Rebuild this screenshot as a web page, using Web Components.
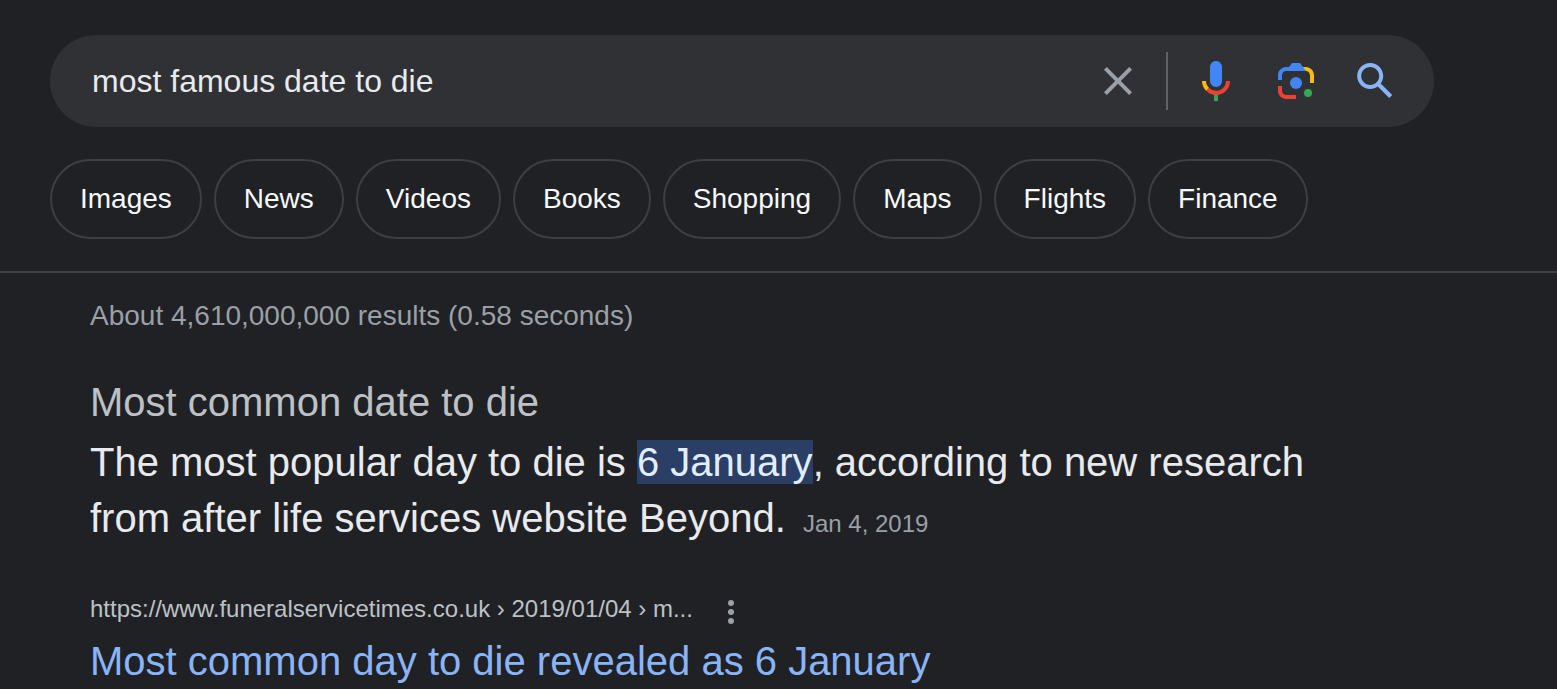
<!DOCTYPE html>
<html lang="en">
<head>
<meta charset="utf-8">
<title>most famous date to die - Search</title>
<style>
  body { margin: 0; background: #202124; color: #e8eaed; font-family: "Liberation Sans", Arial, sans-serif; }
</style>
</head>
<body>
<search-page>
  <search-box slot="header" query="most famous date to die"></search-box>
  <filter-bar slot="header">
    <filter-chip>Images</filter-chip>
    <filter-chip>News</filter-chip>
    <filter-chip>Videos</filter-chip>
    <filter-chip>Books</filter-chip>
    <filter-chip>Shopping</filter-chip>
    <filter-chip>Maps</filter-chip>
    <filter-chip>Flights</filter-chip>
    <filter-chip>Finance</filter-chip>
  </filter-bar>
  <result-stats>About 4,610,000,000 results (0.58 seconds)</result-stats>
  <answer-card>
    <span slot="heading">Most common date to die</span>
    The most popular day to die is <answer-mark>6 January</answer-mark>, according to new research from after life services website Beyond.
    <span slot="date">Jan 4, 2019</span>
  </answer-card>
  <result-link>
    <span slot="url">https://www.funeralservicetimes.co.uk › 2019/01/04 › m...</span>
    Most common day to die revealed as 6 January
  </result-link>
</search-page>

<script>
  const define = (name, html, setup) => {
    const template = document.createElement('template');
    template.innerHTML = html;
    customElements.define(name, class extends HTMLElement {
      constructor() {
        super();
        this.attachShadow({ mode: 'open' }).append(template.content.cloneNode(true));
      }
      connectedCallback() {
        if (setup) setup(this);
      }
    });
  };

  define('search-page', `
    <style>
      :host { display: block; }
      header { display: flex; flex-direction: column; gap: 32px; padding: 35px 50px 32px; border-bottom: 2px solid #3c4043; }
      main { padding: 26px 90px 0; }
    </style>
    <header><slot name="header"></slot></header>
    <main><slot></slot></main>`);

  define('search-box', `
    <style>
      :host { display: block; max-width: 1384px; }
      form { display: flex; align-items: center; height: 92px; box-sizing: border-box; padding: 0 34px 0 42px; border-radius: 46px; background: #303134; }
      input { flex: 1; min-width: 0; border: 0; padding: 0; outline: 0; background: none; color: #e8eaed; font: 32px/44px "Liberation Sans", Arial, sans-serif; }
      .tools { display: flex; gap: 32px; }
      .divider { width: 2px; height: 58px; margin: 0 24px; background: #5f6368; }
      button { display: block; border: 0; padding: 0; background: none; cursor: pointer; }
      svg { display: block; width: 48px; height: 48px; }
    </style>
    <form role="search">
      <input type="text" name="q" aria-label="Search">
      <button type="button" aria-label="Clear">
        <svg viewBox="0 0 24 24" fill="#9aa0a6"><path d="M19 6.41L17.59 5 12 10.59 6.41 5 5 6.41 10.59 12 5 17.59 6.41 19 12 13.41 17.59 19 19 17.59 13.41 12z"/></svg>
      </button>
      <span class="divider"></span>
      <div class="tools">
        <button type="button" aria-label="Search by voice">
          <svg viewBox="0 0 24 24">
            <path fill="#4285f4" d="m12 15c1.66 0 3-1.31 3-2.97v-7.02c0-1.66-1.34-3.01-3-3.01s-3 1.34-3 3.01v7.02c0 1.66 1.34 2.97 3 2.97z"/>
            <path fill="#34a853" d="m11 18.08h2v3.92h-2z"/>
            <path fill="#fbbc05" d="m7.05 16.87c-1.27-1.33-2.05-2.83-2.05-4.87h2c0 1.45 0.56 2.42 1.47 3.38v0.32l-1.15 1.18z"/>
            <path fill="#ea4335" d="m12 16.93a4.97 5.25 0 0 1 -3.54 -1.55l-1.41 1.49c1.26 1.34 3.02 2.13 4.95 2.13 3.87 0 6.99-2.92 6.99-7h-1.99c0 2.92-2.24 4.93-5 4.93z"/>
          </svg>
        </button>
        <button type="button" aria-label="Search by image">
          <svg viewBox="0 0 192 192">
            <circle fill="#34a853" cx="144.07" cy="144" r="16"/>
            <circle fill="#4285f4" cx="96.07" cy="104" r="24"/>
            <path fill="#ea4335" d="M24,135.2c0,18.11,14.69,32.8,32.8,32.8H96v-16l-40.1-0.1c-8.8,0-15.9-8.19-15.9-17.9v-18H24V135.2z"/>
            <path fill="#fbbc04" d="M168,72.8c0-18.11-14.69-32.8-32.8-32.8H116l20,16c8.8,0,16,8.29,16,18v30h16V72.8z"/>
            <path fill="#4285f4" d="M112,24l-32,0L68,40H56.8C38.69,40,24,54.69,24,72.8V92h16V74c0-9.71,7.2-18,16-18h80L124,40L112,24z"/>
          </svg>
        </button>
        <button type="submit" aria-label="Search">
          <svg viewBox="0 0 24 24" fill="#8ab4f8"><path d="M20.1 19l-5.73-5.73c.77-1.07 1.24-2.36 1.24-3.77 0-3.59-2.91-6.5-6.5-6.5s-6.5 2.91-6.5 6.5 2.91 6.5 6.5 6.5c1.41 0 2.7-.47 3.77-1.24l5.73 5.73zM4.61 9.5c0-2.49 2.01-4.5 4.5-4.5s4.5 2.01 4.5 4.5-2.01 4.5-4.5 4.5-4.5-2.01-4.5-4.5z"/></svg>
        </button>
      </div>
    </form>`,
    host => { host.shadowRoot.querySelector('input').value = host.getAttribute('query'); });

  define('filter-bar', `
    <style>
      :host { display: block; }
      nav { display: flex; flex-wrap: wrap; gap: 12px; }
    </style>
    <nav aria-label="Search filters"><slot></slot></nav>`);

  define('filter-chip', `
    <style>
      :host { display: block; }
      a { display: block; padding: 18px 28px; border: 2px solid #3c4043; border-radius: 40px; color: #f8f9fa; font-size: 28px; line-height: 40px; text-decoration: none; white-space: nowrap; }
    </style>
    <a href="#"><slot></slot></a>`);

  define('result-stats', `
    <style>
      :host { display: block; color: #9aa0a6; font-size: 28px; line-height: 34px; }
    </style>
    <slot></slot>`);

  define('answer-card', `
    <style>
      :host { display: block; max-width: 1300px; margin-top: 43px; font-size: 40px; }
      h2 { margin: 0 0 6px; color: #bdc1c6; font-size: 40px; font-weight: 400; line-height: 52px; }
      p { margin: 0; line-height: 56px; }
      small { margin-left: 6px; color: #9aa0a6; font-size: 24px; }
    </style>
    <h2><slot name="heading"></slot></h2>
    <p><slot></slot><small><slot name="date"></slot></small></p>`);

  define('answer-mark', `
    <style>
      :host { display: inline-block; line-height: 44px; }
      mark { display: block; background: #2a3e66; color: #e2eeff; }
    </style>
    <mark><slot></slot></mark>`);

  define('result-link', `
    <style>
      :host { display: block; max-width: 1300px; margin-top: 39px; }
      .source { display: flex; align-items: center; gap: 26px; color: #bdc1c6; font-size: 24px; line-height: 36px; }
      button { display: block; border: 0; padding: 6px 0 0; background: none; cursor: pointer; }
      svg { display: block; width: 24px; height: 24px; }
      h3 { margin: 8px 0 0; font-size: 40px; font-weight: 400; line-height: 52px; }
      a { color: #8ab4f8; text-decoration: none; }
    </style>
    <div class="source">
      <slot name="url"></slot>
      <button type="button" aria-label="About this result">
        <svg viewBox="0 0 24 24" fill="#9aa0a6"><circle cx="12" cy="3" r="3"/><circle cx="12" cy="12" r="3"/><circle cx="12" cy="21" r="3"/></svg>
      </button>
    </div>
    <h3><a href="#"><slot></slot></a></h3>`);
</script>
</body>
</html>
